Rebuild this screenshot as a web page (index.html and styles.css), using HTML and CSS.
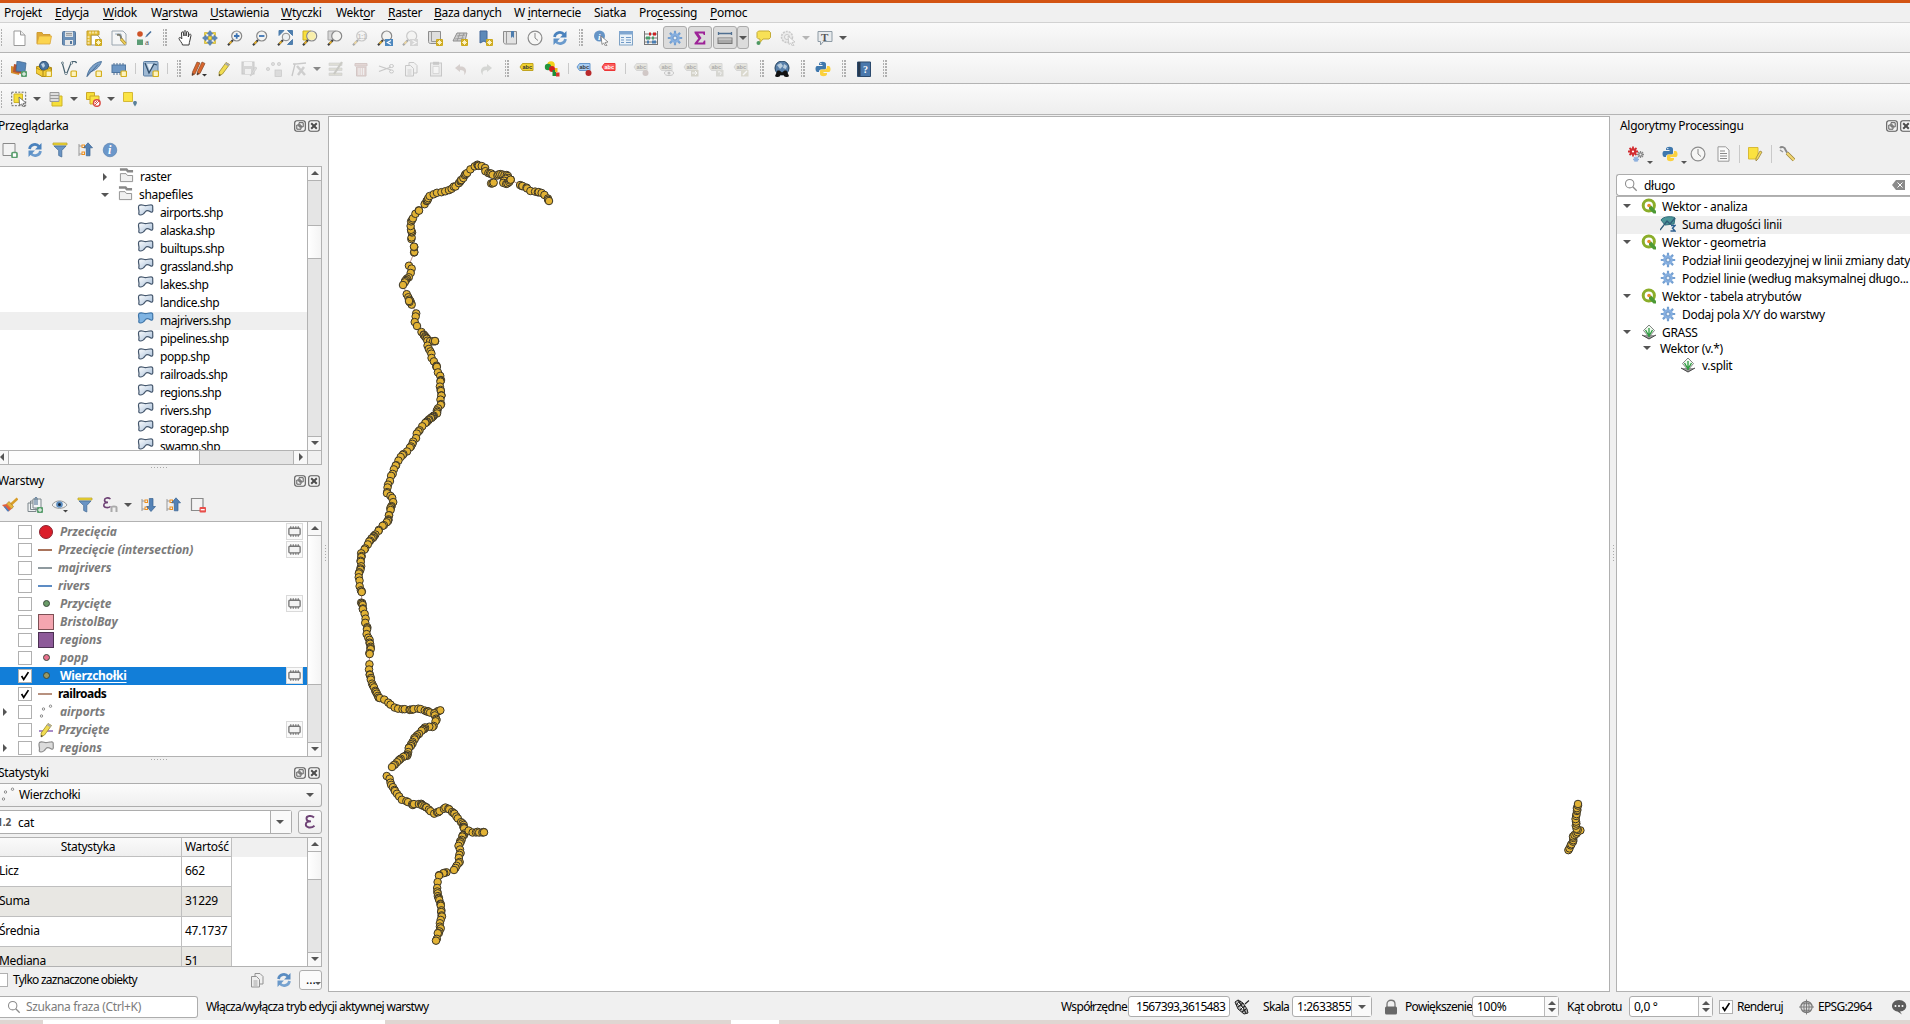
FILE: index.html
```html
<!DOCTYPE html>
<html lang="pl">
<head>
<meta charset="utf-8">
<title>QGIS</title>
<link rel="stylesheet" href="styles.css">
</head>
<body>
<svg class="defs" width="0" height="0">
  <defs>
    <linearGradient id="gPoly" x1="0" y1="0" x2="1" y2="1"><stop offset="0" stop-color="#fdfeff"/><stop offset="1" stop-color="#a3bbd6"/></linearGradient>
    <g id="star"><rect x="9" y="9" width="7" height="7" rx="1" fill="#cda91c"/><path d="M12.500 10v5M10 12.500h5M10.800 10.800l3.400 3.400M14.200 10.800l-3.400 3.400" stroke="#fff7cf" stroke-width=".9"/></g>
    <g id="ybox"><rect x="10" y="10" width="5.500" height="5.500" rx="1" fill="#fdf3bf" stroke="#d3ae1d" stroke-width="1.200"/></g>
    <g id="lens"><path d="M6 10L1 15.300" stroke="#3c3c3c" stroke-width="2"/><path d="M4.500 11.500L2.500 13.600" stroke="#f0b72d" stroke-width="1.800"/><circle cx="9.700" cy="6" r="5" fill="#f3f3f1" stroke="#898989" stroke-width="1.200"/></g>
    <g id="tag"><path d="M1 5l2.500-3.500H14v7H3.500z"/></g>
    <g id="tree"><path d="M2 2v12M2 4h3M2 12h3" stroke="#999" fill="none"/><rect x="5" y="3" width="2.500" height="2.500" fill="none" stroke="#ef8f1c"/><rect x="5" y="10" width="2.500" height="2.500" fill="none" stroke="#ef8f1c"/></g>
  </defs>
  <symbol id="new" viewBox="0 0 16 16"><path d="M3 1h6.500L14 5v10.500H3z" fill="#fff" stroke="#999"/><path d="M9.500 1v4H14" fill="#eee" stroke="#999"/></symbol>
  <symbol id="open" viewBox="0 0 16 16"><path d="M1 13.500V2.500h5l1 2h7v3" fill="#dfa936" stroke="#cf9c33"/><path d="M3 6h12.500L14 14H1z" fill="#fbd44f" stroke="#dba63a" stroke-width=".8"/></symbol>
  <symbol id="save" viewBox="0 0 16 16"><rect x="1.500" y="1.500" width="13" height="13.500" rx="1" fill="#6b90b8" stroke="#55779c"/><path d="M4 1.500h8v5.500H4z" fill="#dfe3e6"/><path d="M5 3.500h6M5 5.200h6" stroke="#777" stroke-width=".7"/><path d="M4 10h8v5H4z" fill="#e8e8e8"/><path d="M9 11h2v3H9z" fill="#55779c"/></symbol>
  <symbol id="layout" viewBox="0 0 16 16"><path d="M5 5h6l3 3v7H5z" fill="#fff" stroke="#999"/><path d="M1 1h12v4H5v10H1z" fill="#e8c23a" stroke="#c29c27"/><path d="M4 1.500v2M7 1.500v2M10 1.500v2M1.500 7h2M1.500 10h2M1.500 13h2" stroke="#fff"/><use href="#star"/></symbol>
  <symbol id="manager" viewBox="0 0 16 16"><path d="M1 1h11l3 3v11H1z" fill="#f5f6f6" stroke="#9aa6b0"/><path d="M4 4h6v4" fill="none" stroke="#9cb2c6"/><path d="M6 5c3-1 4 1 4 3l1 2" stroke="#7c7c70" fill="none" stroke-width="2"/><path d="M10 9l4.500 5" stroke="#a98b2c" stroke-width="3"/><path d="M10 9l4.500 5" stroke="#f0d25c" stroke-width="1.600"/></symbol>
  <symbol id="style" viewBox="0 0 16 16"><circle cx="4" cy="4" r="2.800" fill="#cf5327"/><path d="M15 1.500l-4 4" stroke="#456f9c" stroke-width="1.600"/><path d="M11 4.500l-2 3 3-1.500z" fill="#456f9c"/><rect x="1" y="9.500" width="6" height="5.500" fill="#5c9d76"/><text x="9" y="15" font-family="Liberation Serif" font-size="9" fill="#555">a</text></symbol>
  <symbol id="hand" viewBox="0 0 16 16"><path d="M4.500 15c0-2-3.500-5-3.500-6.500s1.700-1.300 2.800.5L3.500 3c0-1.500 1.700-1.500 2 0l.5 3V1.700c0-1.400 2-1.400 2 0V6l.5-3.500c.2-1.300 2-1 2 .3L10.300 7l.9-2.300c.5-1.100 2-.5 1.800.6L12 10c-.3 2-1 3-1 5z" transform="translate(1 0)" fill="#fff" stroke="#3a3a3a"/></symbol>
  <symbol id="pan" viewBox="0 0 16 16"><path d="M8 .5l3 3.500H9.300v2.700H12V5l3.500 3-3.500 3V9.300H9.300V12H11l-3 3.500L5 12h1.700V9.300H4V11L.5 8 4 5v1.700h2.700V4H5z" fill="#5b87b7" stroke="#416a96" stroke-width=".5"/><path d="M2.500 2.500h3.200L2.500 5.700zM13.500 2.500h-3.200l3.200 3.200zM2.500 13.500h3.200l-3.200-3.200zM13.500 13.500h-3.200l3.200-3.200zM6.300 6.300h3.400v3.400H6.300z" fill="#f8dd3e" stroke="#bca22a" stroke-width=".6"/></symbol>
  <symbol id="zin" viewBox="0 0 16 16"><use href="#lens"/><path d="M7 6h5.400M9.700 3.300v5.400" stroke="#3d74b4" stroke-width="1.800"/></symbol>
  <symbol id="zout" viewBox="0 0 16 16"><use href="#lens"/><path d="M7 6h5.400" stroke="#3d74b4" stroke-width="1.800"/></symbol>
  <symbol id="zfull" viewBox="0 0 16 16"><path d="M2 .5h5L2 5.500zM15.500 .5v5l-5-5zM15.500 14.500h-5l5-5z" fill="#4f7fae" stroke="#4f7fae"/><path d="M6 10L1 15.300" stroke="#3c3c3c" stroke-width="2"/><path d="M4.500 11.500L2.500 13.600" stroke="#f0b72d" stroke-width="1.800"/><circle cx="9" cy="7" r="3.800" fill="#eef1f3" stroke="#898989"/></symbol>
  <symbol id="zsel" viewBox="0 0 16 16"><path d="M1 1h8v9H1z" fill="#f9e03b" stroke="#c9ae28"/><use href="#lens"/><circle cx="9.700" cy="6" r="4" fill="#f9efaa"/></symbol>
  <symbol id="zlay" viewBox="0 0 16 16"><path d="M1 1h8v9H1z" fill="#d6d6d6" stroke="#a2a2a2"/><use href="#lens"/></symbol>
  <symbol id="znat" viewBox="0 0 16 16"><use href="#lens"/><text x="5.500" y="8.500" font-family="Liberation Sans" font-weight="bold" font-size="7" fill="#777">1:1</text></symbol>
  <symbol id="zlast" viewBox="0 0 16 16"><use href="#lens"/><rect x="8" y="9" width="8" height="7" fill="#4c87be"/><path d="M14 10.500l-3.500 2 3.500 2" fill="none" stroke="#fff" stroke-width="1.300"/></symbol>
  <symbol id="znext" viewBox="0 0 16 16"><use href="#lens"/><rect x="8" y="9" width="8" height="7" fill="#aaa"/><path d="M10.500 10.500l3.500 2-3.500 2" fill="none" stroke="#fff" stroke-width="1.300"/></symbol>
  <symbol id="mapview" viewBox="0 0 16 16"><path d="M1.500 1.500h12v12h-10c-1 0-2-.5-2-2z" fill="#dedede" stroke="#8d8d8d"/><path d="M4.500 1.500v10h9" fill="none" stroke="#999"/><use href="#star"/></symbol>
  <symbol id="map3d" viewBox="0 0 16 16"><path d="M5 3h10l-2 8H1z" fill="#cfcfcf" stroke="#8d8d8d"/><path d="M5 6l8-1M3 9l9-1M8 3L5 11M12 3L9 11" stroke="#8d8d8d" stroke-width=".7"/><use href="#star"/></symbol>
  <symbol id="bknew" viewBox="0 0 16 16"><path d="M3 1h7v12l-3-2-4 2z" fill="#5d89b8" stroke="#44699a"/><use href="#star"/></symbol>
  <symbol id="bk" viewBox="0 0 16 16"><path d="M1.500 1.500h13v12.500h-11c-1 0-2-1-2-2z" fill="#e2e2e2" stroke="#8d8d8d"/><path d="M4.500 1.500v12" stroke="#999"/><path d="M9 1h3v7l-1.500-1.500L9 8z" fill="#4d7dae"/></symbol>
  <symbol id="clock" viewBox="0 0 16 16"><circle cx="8" cy="8" r="6.900" fill="#f6f6f5" stroke="#8c8c8c" stroke-width="1.200"/><path d="M8 3v5l3 2.500" fill="none" stroke="#888"/></symbol>
  <symbol id="refresh" viewBox="0 0 16 16"><path d="M2.500 7c.7-5 7-6 9.500-2.500" fill="none" stroke="#4a82bd" stroke-width="2.700"/><path d="M14.500 1v6.500H8z" fill="#4a82bd"/><path d="M13.500 9c-.7 5-7 6-9.500 2.500" fill="none" stroke="#6b9bcd" stroke-width="2.700"/><path d="M1.500 15V8.500H8z" fill="#5c90c6"/></symbol>
  <symbol id="ident" viewBox="0 0 16 16"><circle cx="6.500" cy="6" r="5.500" fill="#6594c6"/><text x="5" y="9.500" font-family="Liberation Serif" font-style="italic" font-weight="bold" font-size="9" fill="#fff">i</text><path d="M8 6l7 6-3 .5 2 3-1.500.5-1.800-3L9 14.500z" fill="#fff" stroke="#777" stroke-width=".8"/></symbol>
  <symbol id="table" viewBox="0 0 16 16"><rect x="1.500" y="1.500" width="13" height="13.500" fill="#e9f1f8" stroke="#7fa2c5"/><path d="M1 1h14v3.500H1z" fill="#7fa6d0"/><path d="M3 7.500h3M8 7.500h5M3 10h3M8 10h5M3 12.500h3M8 12.500h5" stroke="#6f99c6"/></symbol>
  <symbol id="abacus" viewBox="0 0 16 16"><path d="M1.500 1v14M14.500 1v14M1 14.500h14M1 4h14M1 8h14M1 12h14" stroke="#777"/><path d="M6 4h2M10 4h3" stroke="#c22" stroke-width="3"/><path d="M3 8h4M9 8h2" stroke="#4a9c6b" stroke-width="3"/><path d="M4 12h2M9 12h4" stroke="#4a7db1" stroke-width="3"/></symbol>
  <symbol id="gear" viewBox="0 0 16 16"><g stroke="#739fd1" stroke-width="2.200"><path d="M8 .8v14.400M.8 8h14.400M2.900 2.900l10.200 10.200M13.100 2.900L2.900 13.100"/></g><circle cx="8" cy="8" r="4.800" fill="#86afe0"/><circle cx="8" cy="8" r="2" fill="#e6eef7" stroke="#6892c4"/></symbol>
  <symbol id="sigma" viewBox="0 0 16 16"><path d="M2.500 1.500h10.500v3.500h-1.200L11 3.500H6.300L9.500 8l-3.700 4.500H11l1-2h1.300V14.500H2.500V13.300L6.300 8.500 2.500 3z" fill="#9d2398"/></symbol>
  <symbol id="ruler" viewBox="0 0 16 16"><path d="M1 3.500h14M1.500 2v3M14.500 2v3" stroke="#4f6f91" stroke-width="1.300"/><rect x="1" y="8" width="14" height="5.500" fill="#a9a9a9" stroke="#777"/><path d="M1.500 9h13" stroke="#ddd"/></symbol>
  <symbol id="tip" viewBox="0 0 16 16"><path d="M3.500 1h10.500l1.500 1.500v5L14 9H8l-3 3.500V9H3.500L2 7.500v-5z" fill="#f7e157" stroke="#c3ab37"/><circle cx="3.500" cy="13" r="2" fill="#4e9862"/></symbol>
  <symbol id="act" viewBox="0 0 16 16"><circle cx="7" cy="7" r="5.500" fill="#ddd" stroke="#888" stroke-width="1.500" stroke-dasharray="2 1"/><circle cx="7" cy="7" r="2.500" fill="#eee" stroke="#888"/><path d="M8 6l7 6-3 .5 2 3-1.500.5-1.800-3L9 14.500z" fill="#fff" stroke="#777" stroke-width=".8"/></symbol>
  <symbol id="anno" viewBox="0 0 16 16"><path d="M1 1.500h14v10H6.500L3.500 15v-3.500H1z" fill="#e8ebed" stroke="#8d9aa4"/><text x="4" y="10.500" font-family="Liberation Serif" font-weight="bold" font-size="11" fill="#555">T</text></symbol>

  <symbol id="dsm" viewBox="0 0 16 16"><path d="M0 5l9 2-1 7-8-2z" fill="#d58d2b"/><path d="M3 3l9 2-1 8-9-2z" fill="#b65330"/><path d="M6 0l9 2-1 9-9-1z" fill="#5786b8" stroke="#3f648b" stroke-width=".7"/><rect x="10" y="10" width="6" height="6" rx="1" fill="#5a9e6e"/><path d="M13 11v4M11 13h4" stroke="#fff"/></symbol>
  <symbol id="gpkg" viewBox="0 0 16 16"><path d="M0 6l8-2 8 3-2 7-7 2-7-5z" fill="#f2c729" stroke="#a98615"/><circle cx="8" cy="4.800" r="4.500" fill="#49739f" stroke="#334f70"/><path d="M5 3l3-1 1 3-2 2z" fill="#bcd1e5"/><path d="M0 7l7 3 8-3v6l-8 3-7-4z" fill="#f5cf3a" stroke="#a98615" stroke-width=".8"/><path d="M7 10v6" stroke="#a98615"/><use href="#ybox"/></symbol>
  <symbol id="shp" viewBox="0 0 16 16"><path d="M1 1l3 11h2L10 2M11 1c1-1 4-1 4.500 1" fill="none" stroke="#47616f" stroke-width="1.200"/><circle cx="1.500" cy="2" r="1" fill="#fff" stroke="#47616f" stroke-width=".7"/><circle cx="5" cy="12.500" r="1.200" fill="#fff" stroke="#47616f" stroke-width=".7"/><circle cx="10.500" cy="2" r="1.200" fill="#fff" stroke="#47616f" stroke-width=".7"/><use href="#ybox"/></symbol>
  <symbol id="feather" viewBox="0 0 16 16"><path d="M1 15.500C2 8 8 1.500 15.500.500 14 6 9 9.500 4 11z" fill="#7ba1c9" stroke="#486f98" stroke-width=".9"/><path d="M1 15.500L12 3.500" stroke="#3f6088" stroke-width=".8"/><use href="#ybox"/></symbol>
  <symbol id="mem" viewBox="0 0 16 16"><path d="M3 2v12M6 2v12M9 2v12M12 2v12" stroke="#4d6d91"/><rect x="1" y="4" width="13.500" height="7.500" fill="#6c96c4" stroke="#4d749e"/><use href="#ybox"/></symbol>
  <symbol id="virt" viewBox="0 0 16 16"><rect x=".5" y=".5" width="14.500" height="14.500" rx="1" fill="#9fb9d3" stroke="#5b7ea3"/><path d="M4 3l3 7 3-7z" fill="#e5eef6"/><path d="M2 2l4 10 5-9 3 1" fill="none" stroke="#314e6b" stroke-width="1.300"/><use href="#ybox"/></symbol>
  <symbol id="pencils" viewBox="0 0 16 16"><path d="M6 1l3 1-5 11-3 1.500.500-3.500zM11 1l3 1.500-5 10L6 14l.500-3.500z" fill="#d8652d" stroke="#874b28" stroke-width=".7"/><path d="M1 14.500l.5-2.500 1.500 1zM6 14l.500-2.500 1.500 1z" fill="#333"/><path d="M11 13h5l-2.500 2.500z" fill="#333"/></symbol>
  <symbol id="pencil" viewBox="0 0 16 16"><path d="M10 1.500l3.500 2L6.500 13 3 15l.2-4z" fill="#f0dc52" stroke="#9d8a2a" stroke-width=".8"/><path d="M10 1.500l3.500 2-1.300 1.800-3.400-2z" fill="#aaa"/><path d="M3 15l.2-2L5 14z" fill="#333"/></symbol>
  <symbol id="saveed" viewBox="0 0 16 16"><rect x="1" y="1" width="12" height="12" fill="#aaa" stroke="#888"/><path d="M3 1h8v4H3zM4 8h6v5H4z" fill="#eee"/><path d="M14 6l2 1-5 7-2 1z" fill="#bbb" stroke="#888" stroke-width=".6"/></symbol>
  <symbol id="addpt" viewBox="0 0 16 16"><g fill="#bbb" stroke="#888" stroke-width=".7"><circle cx="2" cy="8" r="1.600"/><circle cx="7" cy="3" r="1.600"/><circle cx="13" cy="3" r="1.600"/><rect x="9" y="9" width="6.500" height="6.500"/></g></symbol>
  <symbol id="vertex" viewBox="0 0 16 16"><path d="M1 15L4 3l11-1M2 3h4" stroke="#888" fill="none" stroke-width="1.300"/><path d="M6 5l8 9M13 6l-6 8" stroke="#999" stroke-width="2.500"/></symbol>
  <symbol id="multi" viewBox="0 0 16 16"><path d="M1 2h13v2.500H1zM1 7h13v2.500H1zM1 12h13v2.500H1z" fill="#bdbca8" stroke="#999" stroke-width=".6"/><path d="M14 1L6 13" stroke="#8d8d80" stroke-width="2.200"/></symbol>
  <symbol id="trash" viewBox="0 0 16 16"><path d="M2 2.500h12v2.500H2zM3.500 6h9.500v9H3.500z" fill="#c9a9a6" stroke="#a58783"/><path d="M6 7v7M8.300 7v7M10.600 7v7" stroke="#eee"/></symbol>
  <symbol id="cut" viewBox="0 0 16 16"><path d="M1 5l12 4M1 10.500L13 6" stroke="#888" stroke-width="1.300"/><ellipse cx="13.500" cy="5" rx="2" ry="1.500" fill="none" stroke="#888"/><ellipse cx="13.500" cy="10.500" rx="2" ry="1.500" fill="none" stroke="#888"/></symbol>
  <symbol id="copy" viewBox="0 0 16 16"><path d="M6 1.500h5l3 3V12H6z" fill="#f0f0f0" stroke="#888"/><path d="M2.500 4.500h5l3 3v7.500h-8z" fill="#eee" stroke="#888"/><path d="M4.500 9h4M4.500 11h4M4.500 13h4" stroke="#888" stroke-width=".8"/></symbol>
  <symbol id="paste" viewBox="0 0 16 16"><rect x="2.500" y="2" width="11" height="13" fill="#ddd" stroke="#888"/><rect x="5" y=".8" width="6" height="3" fill="#888"/><path d="M5 5.500h6v7H5z" fill="#f7f7f7" stroke="#999" stroke-width=".7"/></symbol>
  <symbol id="undo" viewBox="0 0 16 16"><path d="M2 7l5-4v2.500c6-.5 8 5 4 8.500 1-3 0-5-4-5V11z" fill="#aa9a95"/></symbol>
  <symbol id="redo" viewBox="0 0 16 16"><path d="M14 7L9 3v2.500c-6-.5-8 5-4 8.500-1-3 0-5 4-5V11z" fill="#a8aba5"/></symbol>
  <symbol id="lab" viewBox="0 0 16 16"><use href="#tag" y="1" fill="#f1d22c" stroke="#c1a421"/><text class="abc" x="3.500" y="8.300">abc</text></symbol>
  <symbol id="diag" viewBox="0 0 16 16"><circle cx="7" cy="4" r="3.800" fill="#f2d21b"/><circle cx="4" cy="6" r="3.200" fill="#22953d"/><circle cx="8" cy="8" r="3" fill="#d32020"/><path d="M8.500 9h3.500v6H8.500z" fill="#1d8d38"/><rect x="12" y="11.500" width="3.500" height="4" fill="#d8342a"/><path d="M11 7h2.500v4H11z" fill="#efb71c"/></symbol>
  <symbol id="pin" viewBox="0 0 16 16"><use href="#tag" y="1" fill="#a9cdf3" stroke="#6697cc"/><text class="abc" x="3.500" y="8.300">abc</text><circle cx="12.500" cy="12" r="3" fill="#b9292b"/></symbol>
  <symbol id="unpl" viewBox="0 0 16 16"><use href="#tag" y="1" fill="#fb5c5c" stroke="#ec3535"/><text class="abc w" x="3.500" y="8.300">abc</text></symbol>
  <symbol id="lg" viewBox="0 0 16 16"><use href="#tag" y="1" fill="#cfcdbc" stroke="#aaa"/><text class="abc" x="3.500" y="8.300">abc</text></symbol>
  <symbol id="lg1" viewBox="0 0 16 16"><use href="#lg"/><circle cx="12.500" cy="12" r="3" fill="#a08b87"/></symbol>
  <symbol id="lg2" viewBox="0 0 16 16"><use href="#lg"/><ellipse cx="11" cy="12" rx="4.500" ry="2.500" fill="#eee" stroke="#888"/><circle cx="11" cy="12" r="1.500" fill="#777"/></symbol>
  <symbol id="lg3" viewBox="0 0 16 16"><use href="#lg"/><rect x="8" y="9" width="7.500" height="6.500" fill="#aaa78f"/><path d="M9 12h5M12 10l2 2-2 2" stroke="#fff" fill="none"/></symbol>
  <symbol id="lg4" viewBox="0 0 16 16"><use href="#lg"/><rect x="8" y="9" width="7.500" height="6.500" fill="#b0b0a4"/><path d="M10 11c3-1 4 1 2 3" stroke="#fff" fill="none"/></symbol>
  <symbol id="lg5" viewBox="0 0 16 16"><use href="#lg"/><rect x="8" y="9" width="7.500" height="6.500" fill="#b9b59b"/><path d="M10 14l4-4" stroke="#fff" stroke-width="1.500"/></symbol>
  <symbol id="metas" viewBox="0 0 16 16"><circle cx="8" cy="7" r="7" fill="#587fa9" stroke="#24435f"/><path d="M3 4l4-2 2 3-3 3zM10 3l3 2-1 3-3-1z" fill="#b9cddd"/><path d="M1 15l2.500-5.500h2L8 11.500l2.500-2h2L15 15c-1 1.500-5 1.500-5.500-1h-3C6 16.500 2 16.500 1 15z" fill="#111"/></symbol>
  <symbol id="py" viewBox="0 0 16 16"><path d="M4 3c0-3 7-3 7 0v4c0 1-1 1.500-2 1.500H6C4.500 8.500 4 9.500 4 11H2C0 10 0 5.500 2 5h5.500V4H4z" fill="#3f78ad"/><path d="M12 13c0 3-7 3-7 0V10c0-1 1-1.500 2-1.500h3C11.500 8.500 12 7 12 5h2c2 1 2 5.500 0 6H8.500v1H12z" fill="#fbd13e"/><circle cx="5.800" cy="2.600" r=".7" fill="#fff"/></symbol>
  <symbol id="help" viewBox="0 0 16 16"><path d="M1.500 1h13v14.500h-13z" fill="#4a78ac" stroke="#2c4a6d"/><path d="M2 1h2.500v14H2z" fill="#27394f"/><text x="7" y="12" font-family="Liberation Serif" font-weight="bold" font-size="10" fill="#fff">?</text></symbol>
  <symbol id="sel" viewBox="0 0 16 16"><rect x=".7" y="1.200" width="14" height="13.500" fill="none" stroke="#666" stroke-dasharray="2 1.300"/><path d="M3 3h8.500v8.500H3z" fill="#f6df39" stroke="#cdb32a"/><path d="M8 6l7 6-3 .5 2 3-1.500.5-1.800-3L8.500 14.500z" fill="#fff" stroke="#666" stroke-width=".9"/></symbol>
  <symbol id="selval" viewBox="0 0 16 16"><path d="M6 5h8v10H4v-4" fill="#f6df39" stroke="#cdb32a"/><path d="M2 1.500h9v9H2z" fill="#ddd" stroke="#999"/><path d="M2 4.500h9M2 7.500h9" stroke="#999"/></symbol>
  <symbol id="desel" viewBox="0 0 16 16"><path d="M1.500 1.500h8v7h-8z" fill="#f6df39" stroke="#cba72a"/><path d="M5 5h9v8H5z" fill="#fbe444" stroke="#cba72a"/><circle cx="11.800" cy="12" r="3.300" fill="#fff" stroke="#d94b45" stroke-width="1.500"/><path d="M10 14l4-4M10 12l2-2" stroke="#d94b45"/></symbol>
  <symbol id="selloc" viewBox="0 0 16 16"><path d="M1.500 1.500h9v9h-9z" fill="#fbe444" stroke="#d5b935"/><path d="M13 15.500c-3-4-2-5.500 0-5.500s3 1.500 0 5.500z" fill="#5b8199"/></symbol>

  <symbol id="addlay" viewBox="0 0 16 16"><path d="M1 1.500h12v12H1z" fill="#f3f3f3" stroke="#8a8a8a"/><rect x="10" y="10.500" width="5" height="5" rx="1" fill="#fff" stroke="#5a9e6e" stroke-width="1.700"/></symbol>
  <symbol id="remlay" viewBox="0 0 16 16"><path d="M1.500 1.500h11.500v12h-11.500z" fill="#f3f3f3" stroke="#8a8a8a" stroke-width="1.200"/><rect x="9.500" y="10" width="6.500" height="5.500" rx="1" fill="#e84f4b"/><path d="M10.700 12.700h4" stroke="#fff" stroke-width="1.300"/></symbol>
  <symbol id="filter" viewBox="0 0 16 16"><path d="M1 1h14v2H1z" fill="#f7e02e" stroke="#b9a233" stroke-width=".8"/><path d="M2 4h12L9.800 8.500V15L6.700 13.500v-5z" fill="#6a94c4" stroke="#466e99" stroke-width=".8"/></symbol>
  <symbol id="collapse" viewBox="0 0 16 16"><use href="#tree"/><path d="M11 .8l4.500 5h-2.500v8H9.300v-8H6.700z" fill="#5482b6" stroke="#38618f" stroke-width=".7"/></symbol>
  <symbol id="expand" viewBox="0 0 16 16"><use href="#tree"/><path d="M11 14.500l4.500-5h-2.500v-8H9.300v8H6.700z" fill="#5482b6" stroke="#38618f" stroke-width=".7"/></symbol>
  <symbol id="info" viewBox="0 0 16 16"><circle cx="8" cy="8" r="6.800" fill="#6b97ca" stroke="#5079a8" stroke-width=".6"/><text x="6" y="12" font-family="Liberation Serif" font-style="italic" font-weight="bold" font-size="12" fill="#fff">i</text></symbol>
  <symbol id="brush" viewBox="0 0 16 16"><path d="M15.500 1.500L9 7.500" stroke="#d89d29" stroke-width="2.500"/><path d="M7 4.500l4.500 5L9.500 12 4.500 7z" fill="#e8b53a" stroke="#996f1d" stroke-width=".6"/><path d="M4.500 7l5 5-3 2.500L0 8z" fill="#e2603a"/><path d="M3 9l4.500 5-2 .5L2 10z" fill="#4c7fc0"/></symbol>
  <symbol id="group" viewBox="0 0 16 16"><path d="M1 6h8v8.500H1zM3.500 4h8v8.500h-8z" fill="#eef1f2" stroke="#7c868b"/><path d="M6 2h8v9H6z" fill="#f3f5f6" stroke="#7c868b"/><path d="M8 8V1.500c0-1.500 2-1.500 2 0V8" fill="none" stroke="#44688a"/><rect x="10" y="10" width="6" height="6" rx="1" fill="#5a9e6e"/><path d="M13 11v4M11 13h4" stroke="#fff"/></symbol>
  <symbol id="eye" viewBox="0 0 16 16"><path d="M0 8c3-5.500 12-5.500 15 0-3 4.500-12 4.500-15 0z" fill="#eef0f1" stroke="#999"/><circle cx="7.500" cy="7.500" r="3.300" fill="#5b8cc0"/><circle cx="7.500" cy="7.500" r="1.500" fill="#1a2a3c"/><path d="M11 13h5l-2.500 2.500z" fill="#444"/></symbol>
  <symbol id="epsf" viewBox="0 0 16 16"><path d="M8.500 2C6 0 2.500 1 2.500 3.200 2.500 5 4 5.400 6 5.400 3.500 5.400 1.800 6.300 1.800 8.200c0 2.600 4.200 3.300 6.700 1.300" fill="none" stroke="#6e4275" stroke-width="1.600"/><path d="M9.500 15V10.500c0-1.500 5-1.500 5 0v4.500" fill="none" stroke="#aaa" stroke-width="2"/></symbol>
  <symbol id="eps" viewBox="0 0 16 16"><path d="M12 3.500C9.500 1 4.500 1.800 4.500 4.500c0 2.200 2 2.900 4.500 2.900-3 0-5.200.9-5.200 3.200 0 3.200 5.400 4 8.700 1.200" fill="none" stroke="#6e4275" stroke-width="1.900"/></symbol>
  <symbol id="folder" viewBox="0 0 16 16"><path d="M1 1.500h7l1.500 2H15" fill="none" stroke="#888" stroke-width="2.600"/><path d="M1.500 6h6L9 8h5.500v6.500h-13z" fill="#f0f0f0" stroke="#8f8f8f"/></symbol>
  <symbol id="poly" viewBox="0 0 16 12"><path d="M1.500 1.500C3 .2 5 1 7 1.500 9 2 11 .8 13 .8c2.300-.1 2.300 1 2.200 2.500l.1 3.500c-.1 1.700-1.300 1.700-2.300 1C11 6.500 9.500 5.500 8 7.500c-1.500 2.300-3.500 3.500-5 3.500-2.500 0-1.500-2-1.500-3.500C1.500 6 .3 3 1.500 1.500z" stroke-width="1.200"/></symbol>
  <symbol id="pts" viewBox="0 0 16 16"><g fill="#fff" stroke="#888"><circle cx="3.500" cy="12" r="1.200"/><circle cx="5.500" cy="5" r="1.200"/><circle cx="12.500" cy="2.200" r="1.200"/></g></symbol>
  <symbol id="chip" viewBox="0 0 16 16"><path d="M4 2.500v11M6.700 2.500v11M9.400 2.500v11M12 2.500v11" stroke="#777" stroke-width="1.300"/><rect x="2" y="4.500" width="12" height="7" rx="1" fill="#f3f3f3" stroke="#777" stroke-width="1.400"/></symbol>
  <symbol id="float" viewBox="0 0 12 12"><rect x=".7" y=".7" width="10.600" height="10.600" rx="2.200" fill="#f4f4f4" stroke="#5a5a5a" stroke-width="1.100"/><path d="M5 2.700h4.200v4.200H5zM2.800 5H7v4.200H2.800z" fill="#f4f4f4" stroke="#5a5a5a"/></symbol>
  <symbol id="close" viewBox="0 0 12 12"><rect x=".7" y=".7" width="10.600" height="10.600" rx="2.200" fill="#f4f4f4" stroke="#5a5a5a" stroke-width="1.100"/><path d="M3.200 3.200l5.600 5.600M8.800 3.200L3.200 8.800" stroke="#4d4d4d" stroke-width="2"/></symbol>
  <symbol id="mag" viewBox="0 0 16 16"><circle cx="6.500" cy="6.500" r="4.800" fill="none" stroke="#8b8b8b" stroke-width="1.200"/><path d="M10 10l4.500 4.500" stroke="#8b8b8b" stroke-width="1.500"/></symbol>
  <symbol id="gears" viewBox="0 0 16 16"><g stroke="#d22c30" stroke-width="1.800"><path d="M5 .5v10M0 5.500h10M1.500 2l7 7M8.500 2l-7 7"/></g><circle cx="5" cy="5.500" r="3.300" fill="#d22c30"/><circle cx="5" cy="5.500" r="1.100" fill="#fff"/><g stroke="#888" stroke-width="1.300"><path d="M12.500 5v7M9 8.500h7M10 6l5 5M15 6l-5 5"/></g><circle cx="12.500" cy="8.500" r="1" fill="#eee"/><g stroke="#8fb1de" stroke-width="1.300"><path d="M8 10.500v5.500M5 13.300h6M6 11.300l4 4M10 11.300l-4 4"/></g></symbol>
  <symbol id="log" viewBox="0 0 16 16"><path d="M3 .8h7.500L14 4v11.200H3z" fill="#fafafa" stroke="#999"/><path d="M5 5h5M5 7.500h7M5 10h7M5 12.500h7" stroke="#888" stroke-width="1.200"/></symbol>
  <symbol id="edin" viewBox="0 0 16 16"><path d="M1.500 1.500h9.500v9.500l-2 2H1.500z" fill="#fbe23f" stroke="#d8ba36"/><path d="M13 5l2 1-4 7-2 2v-3z" fill="#f4da58" stroke="#9a8443" stroke-width=".8"/></symbol>
  <symbol id="wrench" viewBox="0 0 16 16"><path d="M1 2c1-1.500 5-1.500 5.500 2L9 8" stroke="#888" stroke-width="2" fill="none"/><path d="M1 4l3 2" stroke="#999" stroke-width="1.500"/><path d="M8 7l7 7" stroke="#998136" stroke-width="3.600"/><path d="M8 7l7 7" stroke="#f1d672" stroke-width="2.200"/></symbol>
  <symbol id="q" viewBox="0 0 16 16"><circle cx="7.800" cy="7.500" r="5.600" fill="none" stroke="#8bae2a" stroke-width="3"/><path d="M8 8l2.200-.5L15 13v2.500h-2.500L8 11z" fill="#4d9a35"/><circle cx="8" cy="7.500" r="1.800" fill="#e98a2a"/></symbol>
  <symbol id="sumline" viewBox="0 0 16 16"><path d="M1 4c2-4 12-4 14-2l-1 6c-3 0-6 1-9 1z" fill="#4c9598" stroke="#326e7b"/><path d="M0 14L7 5l3 3 5-6" fill="none" stroke="#2f5b78" stroke-width="1.300"/><path d="M11 9.500h4l-2.500 2.700L15 15h-4.500" fill="none" stroke="#2c5f90" stroke-width="1.400"/></symbol>
  <symbol id="grass" viewBox="0 0 16 16"><path d="M1 11l7 4 7-4" fill="#999" stroke="#444"/><path d="M8 1l5.500 5.500L8 13 2.500 6.500z" fill="#eefaee" stroke="#666" stroke-width=".8"/><path d="M8 13V4M8 12L4.500 6M8 12l3.500-6" stroke="#2b9a3d" stroke-width="1.300"/></symbol>
  <symbol id="mouse" viewBox="0 0 16 16"><path d="M1 3l3-2 5 3 4 6 1 4-4 1-6-5z" fill="#b5b5b5" stroke="#222"/><path d="M2 6l5-4M4 8l5-4M6 11l5-4M8 13l4-3M11 5l4-3.500M4 1l8 13" stroke="#222" stroke-width="1.100"/><path d="M4 4l2 2M7 8l2 2" stroke="#fff"/></symbol>
  <symbol id="lock" viewBox="0 0 16 16"><path d="M4 8V5c0-5 8-5 8 0v3" fill="none" stroke="#777" stroke-width="1.300"/><rect x="2" y="7.500" width="12" height="8" rx="1.500" fill="#686868"/></symbol>
  <symbol id="globe" viewBox="0 0 16 16"><circle cx="8" cy="8" r="6" fill="#dcdcdc" stroke="#777" stroke-width="1.200"/><ellipse cx="8" cy="8" rx="2.800" ry="6" fill="none" stroke="#777"/><path d="M0 8h16M3 4.500h10M3 11.500h10M8 0v16" stroke="#777"/></symbol>
  <symbol id="msg" viewBox="0 0 16 16"><path d="M8 1c9 0 10 11 1 11.500l2 3-4.500-3C-2 11 0 1 8 1z" fill="#5c5c5c"/><circle cx="4.500" cy="7" r="1" fill="#fff"/><circle cx="8" cy="7" r="1" fill="#fff"/><circle cx="11.500" cy="7" r="1" fill="#fff"/></symbol>
</svg>

<div class="window">
  <div class="accent"></div>
  <nav class="menu">
    <span>Pro<u>j</u>ekt</span><span><u>E</u>dycja</span><span><u>W</u>idok</span><span>W<u>a</u>rstwa</span><span><u>U</u>stawienia</span><span><u>W</u>tyczki</span><span>Wekt<u>o</u>r</span><span><u>R</u>aster</span><span><u>B</u>aza danych</span><span>W <u>i</u>nternecie</span><span>Siatka</span><span>Pro<u>c</u>essing</span><span><u>P</u>omoc</span>
  </nav>

  <div class="toolbar">
    <b class="grip first"></b>
    <svg class="ic"><use href="#new"/></svg><svg class="ic"><use href="#open"/></svg><svg class="ic"><use href="#save"/></svg><svg class="ic"><use href="#layout"/></svg><svg class="ic"><use href="#manager"/></svg><svg class="ic"><use href="#style"/></svg>
    <b class="grip"></b>
    <svg class="ic"><use href="#hand"/></svg><svg class="ic"><use href="#pan"/></svg><svg class="ic"><use href="#zin"/></svg><svg class="ic"><use href="#zout"/></svg><svg class="ic"><use href="#zfull"/></svg><svg class="ic"><use href="#zsel"/></svg><svg class="ic"><use href="#zlay"/></svg><svg class="ic off"><use href="#znat"/></svg><svg class="ic"><use href="#zlast"/></svg><svg class="ic off"><use href="#znext"/></svg><svg class="ic"><use href="#mapview"/></svg><svg class="ic"><use href="#map3d"/></svg><svg class="ic"><use href="#bknew"/></svg><svg class="ic"><use href="#bk"/></svg><svg class="ic"><use href="#clock"/></svg><svg class="ic"><use href="#refresh"/></svg>
    <b class="grip"></b>
    <svg class="ic"><use href="#ident"/></svg><svg class="ic"><use href="#table"/></svg><svg class="ic"><use href="#abacus"/></svg>
    <span class="pressed"><svg class="ic"><use href="#gear"/></svg></span><span class="pressed"><svg class="ic"><use href="#sigma"/></svg></span><span class="pressed"><svg class="ic"><use href="#ruler"/></svg></span><span class="pressed drop"><b class="caret"></b></span>
    <svg class="ic"><use href="#tip"/></svg><svg class="ic off"><use href="#act"/></svg><b class="caret pale"></b><svg class="ic"><use href="#anno"/></svg><b class="caret"></b>
  </div>

  <div class="toolbar low">
    <b class="grip first"></b>
    <svg class="ic"><use href="#dsm"/></svg><svg class="ic"><use href="#gpkg"/></svg><svg class="ic"><use href="#shp"/></svg><svg class="ic"><use href="#feather"/></svg><svg class="ic"><use href="#mem"/></svg>
    <b class="sep"></b><svg class="ic"><use href="#virt"/></svg><b class="sep"></b><b class="grip"></b>
    <svg class="ic"><use href="#pencils"/></svg><svg class="ic"><use href="#pencil"/></svg><svg class="ic off"><use href="#saveed"/></svg><svg class="ic off"><use href="#addpt"/></svg><svg class="ic off"><use href="#vertex"/></svg><b class="caret mid"></b>
    <svg class="ic off"><use href="#multi"/></svg><svg class="ic off"><use href="#trash"/></svg><svg class="ic off"><use href="#cut"/></svg><svg class="ic off"><use href="#copy"/></svg><svg class="ic off"><use href="#paste"/></svg><svg class="ic off"><use href="#undo"/></svg><svg class="ic off"><use href="#redo"/></svg>
    <b class="grip"></b>
    <svg class="ic"><use href="#lab"/></svg><svg class="ic"><use href="#diag"/></svg><b class="sep"></b><svg class="ic"><use href="#pin"/></svg><svg class="ic"><use href="#unpl"/></svg><b class="sep"></b>
    <svg class="ic off"><use href="#lg1"/></svg><svg class="ic off"><use href="#lg2"/></svg><svg class="ic off"><use href="#lg3"/></svg><svg class="ic off"><use href="#lg4"/></svg><svg class="ic off"><use href="#lg5"/></svg>
    <b class="grip"></b><svg class="ic"><use href="#metas"/></svg><b class="grip"></b><svg class="ic"><use href="#py"/></svg><b class="grip"></b><svg class="ic"><use href="#help"/></svg><b class="grip"></b>
  </div>

  <div class="toolbar low">
    <b class="grip first"></b>
    <svg class="ic"><use href="#sel"/></svg><b class="caret"></b><svg class="ic"><use href="#selval"/></svg><b class="caret"></b><svg class="ic"><use href="#desel"/></svg><b class="caret"></b><svg class="ic"><use href="#selloc"/></svg>
  </div>

  <main class="work">
    <aside class="left">
      <section class="dock browser">
        <header class="title"><span>Przeglądarka</span><svg><use href="#float"/></svg><svg><use href="#close"/></svg></header>
        <div class="tools"><svg class="ic"><use href="#addlay"/></svg><svg class="ic"><use href="#refresh"/></svg><svg class="ic"><use href="#filter"/></svg><svg class="ic"><use href="#collapse"/></svg><svg class="ic"><use href="#info"/></svg></div>
        <div class="view">
          <div class="pane">
            <ul class="files">
              <li class="dir"><b class="right-arrow"></b><svg><use href="#folder"/></svg>raster</li>
              <li class="dir"><b class="down-arrow"></b><svg><use href="#folder"/></svg>shapefiles</li>
              <li><svg><use href="#poly"/></svg>airports.shp</li>
              <li><svg><use href="#poly"/></svg>alaska.shp</li>
              <li><svg><use href="#poly"/></svg>builtups.shp</li>
              <li><svg><use href="#poly"/></svg>grassland.shp</li>
              <li><svg><use href="#poly"/></svg>lakes.shp</li>
              <li><svg><use href="#poly"/></svg>landice.shp</li>
              <li class="hover"><svg><use href="#poly"/></svg>majrivers.shp</li>
              <li><svg><use href="#poly"/></svg>pipelines.shp</li>
              <li><svg><use href="#poly"/></svg>popp.shp</li>
              <li><svg><use href="#poly"/></svg>railroads.shp</li>
              <li><svg><use href="#poly"/></svg>regions.shp</li>
              <li><svg><use href="#poly"/></svg>rivers.shp</li>
              <li><svg><use href="#poly"/></svg>storagep.shp</li>
              <li><svg><use href="#poly"/></svg>swamp.shp</li>
            </ul>
            <div class="vbar"><b class="btn"><i class="up-arrow"></i></b><b class="track t45"></b><b class="thumb t33"></b><b class="track grow"></b><b class="btn"><i class="down-arrow"></i></b></div>
          </div>
          <div class="hbar"><b class="hbtn cut"><i class="left-arrow"></i></b><b class="hthumb"></b><b class="htrack"></b><b class="hbtn"><i class="right-arrow"></i></b><b class="corner"></b></div>
        </div>
      </section>
      <div class="split wide"><i></i></div>
      <section class="dock layers">
        <header class="title"><span>Warstwy</span><svg><use href="#float"/></svg><svg><use href="#close"/></svg></header>
        <div class="tools"><svg class="ic"><use href="#brush"/></svg><svg class="ic"><use href="#group"/></svg><svg class="ic"><use href="#eye"/></svg><svg class="ic"><use href="#filter"/></svg><svg class="ic"><use href="#epsf"/></svg><b class="caret"></b><svg class="ic"><use href="#expand"/></svg><svg class="ic"><use href="#collapse"/></svg><svg class="ic"><use href="#remlay"/></svg></div>
        <div class="view">
          <div class="pane">
            <ul class="legend">
              <li><b class="box"></b><i class="sym"><i class="dot red"></i></i><span class="pt">Przecięcia</span><svg class="chip"><use href="#chip"/></svg></li>
              <li><b class="box"></b><i class="sym"><i class="line brown"></i></i><span>Przecięcie (intersection)</span><svg class="chip"><use href="#chip"/></svg></li>
              <li><b class="box"></b><i class="sym"><i class="line gray"></i></i><span>majrivers</span></li>
              <li><b class="box"></b><i class="sym"><i class="line blue"></i></i><span>rivers</span></li>
              <li><b class="box"></b><i class="sym"><i class="dot small green"></i></i><span class="pt">Przycięte</span><svg class="chip"><use href="#chip"/></svg></li>
              <li><b class="box"></b><i class="sym"><i class="fill pink"></i></i><span class="pt">BristolBay</span></li>
              <li><b class="box"></b><i class="sym"><i class="fill violet"></i></i><span class="pt">regions</span></li>
              <li><b class="box"></b><i class="sym"><i class="dot small rose"></i></i><span class="pt">popp</span></li>
              <li class="current"><b class="box"><svg viewBox="0 0 14 14"><path d="M3 7l2.500 4L11 2.500"/></svg></b><i class="sym"><i class="dot small olive"></i></i><span class="pt">Wierzchołki</span><svg class="chip"><use href="#chip"/></svg></li>
              <li class="on"><b class="box"><svg viewBox="0 0 14 14"><path d="M3 7l2.500 4L11 2.500"/></svg></b><i class="sym"><i class="line tan"></i></i><span>railroads</span></li>
              <li><b class="right-arrow"></b><b class="box"></b><i class="sym"><svg><use href="#pts"/></svg></i><span class="pt">airports</span></li>
              <li><b class="box"></b><i class="sym"><svg viewBox="0 0 16 16"><path d="M1 9h14" stroke="#a98cc9" stroke-width="2"/><use href="#pencil"/></svg></i><span>Przycięte</span><svg class="chip"><use href="#chip"/></svg></li>
              <li><b class="right-arrow"></b><b class="box"></b><i class="sym"><svg class="shape"><use href="#poly"/></svg></i><span class="pt">regions</span></li>
            </ul>
            <div class="vbar"><b class="btn"><i class="up-arrow"></i></b><b class="thumb t149"></b><b class="track grow"></b><b class="btn"><i class="down-arrow"></i></b></div>
          </div>
        </div>
      </section>
      <div class="split"><i></i></div>
      <section class="dock stats">
        <header class="title"><span>Statystyki</span><svg><use href="#float"/></svg><svg><use href="#close"/></svg></header>
        <div class="combo"><svg><use href="#pts"/></svg><span>Wierzchołki</span><b class="caret"></b></div>
        <div class="fieldrow"><div class="field"><em>1.2</em><span>cat</span><b class="caret"></b></div><div class="exprbtn"><svg><use href="#eps"/></svg></div></div>
        <div class="view tableview">
          <div class="pane">
            <div class="grid">
              <div class="h c">Statystyka</div><div class="h">Wartość</div>
              <div>Licz</div><div>662</div>
              <div class="alt">Suma</div><div class="alt">31229</div>
              <div>Średnia</div><div>47.1737</div>
              <div class="alt">Mediana</div><div class="alt">51</div>
            </div>
            <div class="headfill"></div>
            <div class="vbar"><b class="btn"><i class="up-arrow"></i></b><b class="thumb t27"></b><b class="track grow"></b><b class="btn"><i class="down-arrow"></i></b></div>
          </div>
        </div>
        <div class="only"><b class="box"></b><span>Tylko zaznaczone obiekty</span><svg class="ic"><use href="#copy"/></svg><svg class="ic"><use href="#refresh"/></svg><div class="more">...<b class="caret"></b></div></div>
      </section>
    </aside>
    <div class="gutter"><i></i></div>
    <div class="map"><svg id="canvas" width="1280" height="874" viewBox="329 118 1280 874"></svg></div>
    <div class="gutter slim"><i></i></div>
    <aside class="right">
      <header class="title"><span>Algorytmy Processingu</span><svg><use href="#float"/></svg><svg><use href="#close"/></svg></header>
      <div class="tools"><svg class="ic"><use href="#gears"/></svg><b class="caret"></b><svg class="ic"><use href="#py"/></svg><b class="caret tight"></b><svg class="ic"><use href="#clock"/></svg><svg class="ic"><use href="#log"/></svg><b class="sep"></b><svg class="ic"><use href="#edin"/></svg><b class="sep"></b><svg class="ic"><use href="#wrench"/></svg></div>
      <div class="find"><svg><use href="#mag"/></svg><span>długo</span><svg class="clear" viewBox="0 0 13 10"><path d="M4 0h9v10H4L0 5z" fill="#8b8b8b"/><path d="M5.500 2.500l5 5M10.500 2.500l-5 5" stroke="#fff"/></svg></div>
      <ul class="algs">
        <li><b class="down-arrow"></b><svg><use href="#q"/></svg>Wektor - analiza</li>
        <li class="sub hover"><svg><use href="#sumline"/></svg>Suma długości linii</li>
        <li><b class="down-arrow"></b><svg><use href="#q"/></svg>Wektor - geometria</li>
        <li class="sub"><svg><use href="#gear"/></svg>Podział linii geodezyjnej w linii zmiany daty</li>
        <li class="sub"><svg><use href="#gear"/></svg>Podziel linie (według maksymalnej długo...</li>
        <li><b class="down-arrow"></b><svg><use href="#q"/></svg>Wektor - tabela atrybutów</li>
        <li class="sub"><svg><use href="#gear"/></svg>Dodaj pola X/Y do warstwy</li>
        <li><b class="down-arrow"></b><svg><use href="#grass"/></svg>GRASS</li>
        <li class="plain"><b class="down-arrow"></b>Wektor (v.*)</li>
        <li class="deep"><svg><use href="#grass"/></svg>v.split</li>
      </ul>
    </aside>
  </main>

  <footer class="status">
    <div class="locator"><svg><use href="#mag"/></svg><span>Szukana fraza (Ctrl+K)</span></div>
    <span class="hint">Włącza/wyłącza tryb edycji aktywnej warstwy</span>
    <span class="l-coord">Współrzędne</span><div class="in coord">1567393,3615483</div><svg class="ic"><use href="#mouse"/></svg>
    <span class="l-scale">Skala</span><div class="in scale">1:2633855<b class="cell"><i class="caret"></i></b></div><svg class="ic lock"><use href="#lock"/></svg>
    <span class="l-zoom">Powiększenie</span><div class="in zoom">100%<b class="cell spin"><i class="up-arrow"></i><i class="down-arrow"></i></b></div>
    <span class="l-rot">Kąt obrotu</span><div class="in rot">0,0 °<b class="cell spin"><i class="up-arrow"></i><i class="down-arrow"></i></b></div>
    <b class="box"><svg viewBox="0 0 14 14"><path d="M3 7l2.500 4L11 2.500"/></svg></b><span class="l-rend">Renderuj</span><svg class="ic globe"><use href="#globe"/></svg><span>EPSG:2964</span><svg class="ic msg"><use href="#msg"/></svg>
  </footer>
  <div class="desk"><i></i><i></i></div>
</div>
<script src="map.js"></script>
</body>
</html>
```
FILE: styles.css
```css
* { box-sizing: border-box; }
html, body { margin: 0; height: 100%; overflow: hidden; }
body { font: 12px/18px "Noto Sans", "Open Sans", sans-serif; letter-spacing: -0.3px; color: #000; background: #f0f0f0; white-space: nowrap; }
ul { list-style: none; margin: 0; padding: 0; }
b, i, em { font-style: normal; flex: none; }
svg { flex: none; display: block; }
.defs { position: absolute; }
.abc { font: bold 5.500px "Liberation Sans", sans-serif; fill: #333; letter-spacing: 0; }
.abc.w { fill: #fff; }
.window { width: 1910px; height: 1024px; display: flex; flex-direction: column; overflow: hidden; }
.accent { height: 3px; background: #d35413; }

.menu { height: 20px; padding-left: 4px; display: grid; grid-template-columns: 51px 48px 48px 59px 71px 55px 52px 46px 80px 80px 45px 71px 60px; line-height: 20px; border-bottom: 1px solid #d2d2d2; }
.menu u { text-underline-offset: 2px; }

.toolbar { height: 31px; display: flex; align-items: center; border-bottom: 1px solid #b4b4b4; background: linear-gradient(#fafafa, #eeeeee); }
.toolbar.low { padding-top: 1px; }
.ic { width: 16px; height: 16px; margin: 0 4px 0 5px; }
.off { opacity: .4; }
.grip { width: 16px; height: 17px; padding: 0 4px 0 7px; background: radial-gradient(circle at 1px 1px, #b0b0b0 .8px, transparent 1px) 0 0 / 3px 3px; background-clip: content-box; }
.grip.first { width: 6px; padding: 0 3px 0 1px; }
.sep { width: 3px; height: 11px; border-left: 1px solid #c9c9c9; margin-left: 4px; }
.caret { width: 0; height: 0; border: 4px solid transparent; border-top-color: #555; border-bottom: 0; margin: 1px 2px; }
.caret.pale { border-top-color: #b5b5b5; }
.caret.mid { border-top-color: #888; }
.pressed { height: 23px; width: 24px; margin-right: 1px; display: flex; align-items: center; background: #dcdcdc; border: 1px solid #ababab; border-radius: 3px; }
.pressed .ic { margin: 0 3px; }
.pressed.drop { width: 12px; margin-left: -1px; justify-content: center; }

.work { height: 877px; display: flex; padding-top: 1px; }
.left { width: 322px; }
.title { height: 21px; display: flex; align-items: center; gap: 2px; padding-right: 2px; }
.title span { flex: 1; margin-left: -2px; }
.title svg { width: 12px; height: 12px; }
.tools { height: 29px; display: flex; align-items: center; padding-bottom: 2px; }
.left .tools { margin-left: -3px; }
.view { border: 1px solid #b2b2b2; border-left: 0; background: #fff; display: flex; flex-direction: column; overflow: hidden; }
.pane { display: flex; flex: 1; min-height: 0; }
.browser { height: 349px; display: flex; flex-direction: column; }
.browser .view { flex: 1; }
.files, .legend { flex: 1; overflow: hidden; padding-top: 1px; }
.files { letter-spacing: -0.45px; }
.files li { height: 18px; display: flex; align-items: center; padding-left: 137px; line-height: 20px; }
.files li svg { width: 17px; height: 12px; margin: -5px 6px 0 0; fill: url(#gPoly); stroke: #44566c; }
.files li.hover, .algs li.hover { background: #efefef; }
.files li.hover svg { fill: #7fb4e3; stroke: #3f75a8; }
.files .dir { padding-left: 102px; letter-spacing: -0.3px; }
.files .dir svg { width: 15px; height: 15px; margin: -2px 6px 0 0; fill: none; stroke: none; }
.files .dir .right-arrow { margin: 0 12px 0 1px; }
.files .dir .down-arrow { margin: 0 9px 0 -1px; }
.right-arrow, .left-arrow, .up-arrow, .down-arrow { width: 0; height: 0; border: 4px solid transparent; }
.right-arrow { border-left-color: #555; border-right: 0; }
.left-arrow { border-right-color: #555; border-left: 0; }
.up-arrow { border-bottom-color: #555; border-top: 0; }
.down-arrow { border-top-color: #555; border-bottom: 0; }

.vbar { width: 14px; border-left: 1px solid #b2b2b2; display: flex; flex-direction: column; flex: none; }
.vbar .btn { height: 14px; display: flex; align-items: center; justify-content: center; background: #f8f8f8; }
.vbar .btn:first-child { border-bottom: 1px solid #b2b2b2; }
.vbar .btn:last-child { border-top: 1px solid #b2b2b2; }
.track { background: #e5e5e5; }
.thumb { background: linear-gradient(90deg, #fff, #f4f4f4); border: solid #b2b2b2; border-width: 1px 0; }
.btn + .thumb { border-top: 0; }
.grow { flex: 1; }
.t45 { height: 44px; } .t33 { height: 34px; } .t149 { height: 149px; } .t27 { height: 28px; }
.hbar { height: 14px; display: flex; border-top: 1px solid #b2b2b2; background: #e5e5e5; }
.hbtn { width: 14px; background: #f8f8f8; display: flex; align-items: center; justify-content: center; border-left: 1px solid #b2b2b2; }
.hbtn.cut { width: 9px; border-left: 0; border-right: 1px solid #b2b2b2; justify-content: flex-start; }
.hthumb { width: 191px; background: #fdfdfd; border-right: 1px solid #b2b2b2; }
.htrack { flex: 1; }
.corner { width: 14px; border-left: 1px solid #b2b2b2; background: #f0f0f0; }
.split { height: 5px; display: flex; justify-content: center; align-items: center; }
.split.wide { height: 6px; }
.split i { width: 17px; height: 1px; margin-right: 4px; background: repeating-linear-gradient(90deg, #aaa 0 1px, transparent 1px 3px); }

.layers { height: 286px; display: flex; flex-direction: column; }
.layers .view { flex: 1; }
.layers .caret { margin: 0 3px 0 2px; }
.legend li { height: 18px; display: flex; align-items: center; position: relative; padding-left: 18px; font-weight: bold; font-style: italic; letter-spacing: -0.05px; color: #7b7b7b; }
.legend li .right-arrow { margin: 0 11px 0 -15px; }
.box { width: 14px; height: 14px; background: #fff; border: 1px solid #b0b0b0; }
.box svg { width: 12px; height: 12px; fill: none; stroke: #000; stroke-width: 2; }
.sym { width: 16px; height: 18px; margin: 0 4px 0 6px; display: flex; align-items: center; justify-content: center; }
.sym svg { width: 16px; height: 16px; }
.sym svg.shape { height: 12px; margin-top: -2px; fill: #dcdcdc; stroke: #8c8c8c; }
.legend span.pt { margin-left: 2px; }
.dot { width: 14px; height: 14px; border-radius: 50%; border: 1px solid #8b2430; }
.dot.small { width: 7px; height: 7px; border-color: #3c4a3c; }
.red { background: #db1e2a; } .green { background: #6a9c68; } .rose { background: #e8718d; } .olive { background: #9a9862; }
.line { width: 14px; height: 2px; margin-right: 2px; }
.brown { background: #a9745c; } .gray { background: #8f9a9f; } .blue { background: #5d8cc4; } .tan { background: #b7917f; }
.fill { width: 16px; height: 16px; border: 1px solid #333; }
.pink { background: #f4a5b0; border-color: #7d5055; } .violet { background: #8d5a99; border-color: #4b3052; }
.chip { width: 17px; height: 17px; margin: 0 4px 0 auto; background: #fafafa; border: 1px solid #dadada; }
.legend .current { background: #127ed8; color: #fff; font-style: normal; letter-spacing: -0.3px; text-decoration: underline; text-underline-offset: 2px; }
.legend .on { color: #000; font-style: normal; letter-spacing: -0.5px; }

.stats { height: 230px; display: flex; flex-direction: column; }
.stats .title { padding-top: 1px; }
.combo { height: 24px; border: 1px solid #adadad; border-left: 0; border-radius: 0 3px 3px 0; background: linear-gradient(#fcfcfc, #efefef); display: flex; align-items: center; }
.combo svg { width: 16px; height: 16px; }
.combo span { flex: 1; margin-left: 3px; }
.combo .caret { margin-right: 7px; }
.fieldrow { display: flex; gap: 6px; margin: 3px 0; height: 24px; }
.field { width: 292px; border: 1px solid #adadad; border-left: 0; border-radius: 0 3px 3px 0; background: #fff; display: flex; align-items: center; }
.field em { font: bold 10px "Noto Sans", sans-serif; color: #555; width: 17px; margin-left: -3px; letter-spacing: 0; }
.field span { flex: 1; margin-left: 4px; padding-top: 2px; }
.field .caret { margin: 0; border: 0; width: 21px; height: 22px; border-left: 1px solid #adadad; display: flex; align-items: center; justify-content: center; background: #f9f9f9; }
.field .caret::after { content: ""; margin-right: 2px; border: 4px solid transparent; border-top-color: #555; border-bottom: 0; }
.exprbtn { width: 24px; border: 1px solid #adadad; border-radius: 3px; background: linear-gradient(#fcfcfc, #efefef); padding: 3px; }
.exprbtn svg { width: 16px; height: 16px; }
.tableview { height: 130px; }
.grid { display: grid; grid-template-columns: 182px 50px; grid-template-rows: 19px repeat(4, 30px); overflow: hidden; }
.grid div { border: solid #bfbfbf; border-width: 0 1px 1px 0; display: flex; align-items: center; padding-left: 3px; }
.grid div:nth-child(odd) { padding-left: 0; text-indent: -1px; }
.grid .alt { background: #e8e7e3; }
.grid .h { background: linear-gradient(#fafafa, #efefef); }
.grid .h.c { justify-content: center; padding-right: 4px; }
.headfill { flex: 1; height: 19px; background: #f0f0f0; }
.only { flex: 1; display: flex; align-items: center; padding-top: 1px; letter-spacing: -0.75px; }
.only .box { margin-left: -6px; }
.only span { flex: 1; margin-left: 5px; }
.only .ic { margin: 0 3px 0 8px; opacity: .9; }
.only .more { width: 23px; height: 20px; margin-left: 4px; border: 1px solid #adadad; border-radius: 3px; background: #fbfbfb; display: flex; align-items: center; padding-left: 6px; letter-spacing: 0; }
.only .more .caret { margin: 8px 0 0 -1px; border-width: 3px; border-bottom: 0; }

.gutter { width: 6px; display: flex; align-items: center; }
.gutter i { width: 1px; height: 17px; margin-left: 3px; background: repeating-linear-gradient(#aaa 0 1px, transparent 1px 3px); }
.map { width: 1282px; height: 876px; border: 1px solid #b0b0b0; background: #fff; }

.right { width: 294px; flex: none; display: flex; flex-direction: column; height: 876px; }
.slim { width: 6px; }
.right .title { padding: 0 0 0 6px; margin-right: -2px; }
.right .tools { height: 36px; padding-left: 7px; }
.right .tools .caret { margin: 18px 4px 0 -1px; border-width: 3px; border-bottom: 0; }
.right .tools .caret.tight { margin-right: -2px; }
.right .sep { height: 18px; }
.find { height: 22px; border: 1px solid #adadad; border-radius: 3px 0 0 3px; border-right: 0; background: #fff; display: flex; align-items: center; padding: 0 5px 0 7px; margin-top: 1px; }
.find > svg:first-child { width: 14px; height: 14px; }
.find span { flex: 1; margin-left: 6px; padding-top: 2px; }
.find .clear { width: 13px; height: 10px; }
.algs { flex: 1; background: #fff; border: solid #b2b2b2; border-width: 1px 0 1px 1px; padding-top: 1px; }
.algs li { height: 18px; display: flex; align-items: center; padding-left: 6px; line-height: 20px; }
.algs li svg { width: 16px; height: 16px; margin: -1px 5px 0 0; }
.algs .down-arrow { margin: -2px 10px 0 0; }
.algs .sub { padding-left: 43px; letter-spacing: -0.28px; }
.algs .sub svg { margin-right: 6px; }
.algs .plain { padding-left: 26px; height: 15px; }
.algs .plain .down-arrow { margin-right: 9px; }
.algs .deep { padding-left: 63px; }
.algs .deep svg { margin-right: 6px; }

.status { height: 29px; display: flex; align-items: center; padding: 2px 0 0; letter-spacing: -0.68px; }
.locator { width: 198px; height: 22px; border: 1px solid #adadad; border-left: 0; border-radius: 0 3px 3px 0; background: #fff; display: flex; align-items: center; letter-spacing: -0.35px; color: #7c7c7c; }
.locator svg { width: 14px; height: 14px; margin: 0 5px 0 7px; }
.hint { margin-left: 8px; width: 855px; }
.in { height: 21px; border: 1px solid #adadad; border-radius: 3px; background: #fff; display: flex; align-items: center; padding-left: 4px; }
.cell { margin-left: auto; height: 19px; border-left: 1px solid #b9b9b9; width: 20px; display: flex; flex-direction: column; gap: 3px; align-items: center; justify-content: center; background: #f9f9f9; }
.cell.spin { width: 14px; }
.l-coord { width: 67px; }
.coord { width: 102px; padding-left: 7px; }
.status .ic { margin: 0 0 0 4px; }
.l-scale { margin-left: 13px; width: 29px; }
.scale { width: 80px; letter-spacing: -0.45px; }
.status .lock { margin: 0 6px 0 11px; }
.l-zoom { width: 67px; }
.zoom { width: 87px; letter-spacing: -0.3px; }
.l-rot { margin-left: 8px; width: 62px; letter-spacing: -0.5px; }
.rot { width: 84px; letter-spacing: -0.3px; }
.status .box { margin: 0 4px 0 6px; }
.l-rend { width: 62px; }
.status .globe { width: 15px; margin: 0 4px 0 0; }
.status .msg { margin-left: auto; margin-right: 3px; }
.desk { height: 4px; background: #dfd6d2; display: flex; padding-left: 43px; gap: 346px; }
.desk i { background: #fff; width: 342px; }
.desk i + i { width: 48px; }
```
FILE: map.js
```js
// Vertices of the railroad track, in thirds of a pixel from (340,140); every chain is one run of points.
const chains = [
  [540,138,560,147,572,157,590,158,605,162,615,170,627,186],
  [255,195,262,180,270,170,290,162,310,158,330,153,344,142,360,128,372,112,392,90,410,78,434,84,438,98,463,110,490,105,494,122,512,122],
  [488,108,500,108,505,118,496,122,490,130,500,135,512,122],
  [453,133,461,131],
  [213,300,216,282,210,265,212,250,222,232,237,215],
  [222,342,222,323],
  [206,381,216,393,206,414,195,425,189,438],
  [201,467,217,498,207,486],
  [228,523,224,545,231,561],
  [243,580,256,592,264,606,285,606],
  [262,620,273,640,276,660,290,683,295,705,307,718,297,735,300,750,306,765,302,780,305,797,292,810,290,826,267,840,250,858,234,878,227,898,216,916,204,932,186,950,172,973,160,995,150,1025,143,1045,142,1063,162,1081,159,1090,152,1110,148,1130,142,1150,120,1170,100,1193,81,1218,64,1245,62,1265,65,1282,57,1305,58,1330,58,1345,65,1359],
  [65,1390,69,1405,72,1424,76,1437,74,1450,82,1467,80,1485,88,1505,92,1525,89,1545],
  [87,1577,88,1592,90,1609,97,1638,110,1660,115,1676,136,1683,165,1707,190,1710,220,1712,237,1710,260,1717,282,1722,301,1714],
  [282,1722,289,1742,279,1763,258,1763,240,1780,225,1795,218,1813,206,1828,203,1850,186,1853,172,1870,156,1884],
  [139,1910,150,1920,155,1940,168,1960,185,1982,220,1997,243,1995,262,2008,281,2024,305,2016,318,2005,340,2020,355,2040,370,2055,375,2080,362,2105,355,2120,362,2140,356,2155,362,2168,350,2180,342,2193],
  [385,2075,400,2080,414,2080,432,2080],
  [318,2199,304,2203,297,2210],
  [292,2230,291,2250,294,2272,301,2290,303,2310,306,2330,299,2350,302,2370,293,2385,288,2405],
  [3686,2132,3688,2125,3698,2110,3700,2090,3720,2075,3710,2073,3708,2055,3708,2035,3710,2015,3714,1995]
];
const dense = new Set([2, 18]);
let seed = 7;
const rnd = () => (seed = (seed * 16807) % 2147483647) / 2147483647;
let out = '<g transform="translate(340 140) scale(.33333)">';
out += '<path d="M237 215L255 195M512 122L540 138M213 300L222 323M222 342L206 381M189 438L201 467M217 498L228 523M231 561L243 580M65 1359V1390M89 1545L87 1577M342 2193L318 2199" stroke="#b98f85" stroke-width="3"/>';
out += '<g fill="#e2b234" stroke="#38342a" stroke-width="3">';
chains.forEach((c, k) => {
  let total = 0;
  const segs = [];
  for (let i = 2; i < c.length; i += 2) {
    const len = Math.hypot(c[i] - c[i - 2], c[i + 1] - c[i - 1]);
    segs.push([total, len, i]);
    total += len;
  }
  let d = 0;
  const stops = [];
  while (d < total) {
    stops.push(d);
    d += dense.has(k) ? 4.500 + rnd() * 4 : (rnd() < .5 ? 2.500 + rnd() * 3 : 7 + rnd() * 9);
  }
  stops.push(total);
  for (const s of stops) {
    const g = segs.find(q => s <= q[0] + q[1] + 1e-6) || segs[segs.length - 1];
    const t = (s - g[0]) / g[1], i = g[2];
    const j = s === total ? 0 : 3;
    const x = c[i - 2] + (c[i] - c[i - 2]) * t + (rnd() - .5) * j;
    const y = c[i - 1] + (c[i + 1] - c[i - 1]) * t + (rnd() - .5) * j;
    out += `<circle cx="${x.toFixed(1)}" cy="${y.toFixed(1)}" r="11.300"/>`;
  }
});
document.getElementById('canvas').innerHTML = out + '</g></g>';
```
